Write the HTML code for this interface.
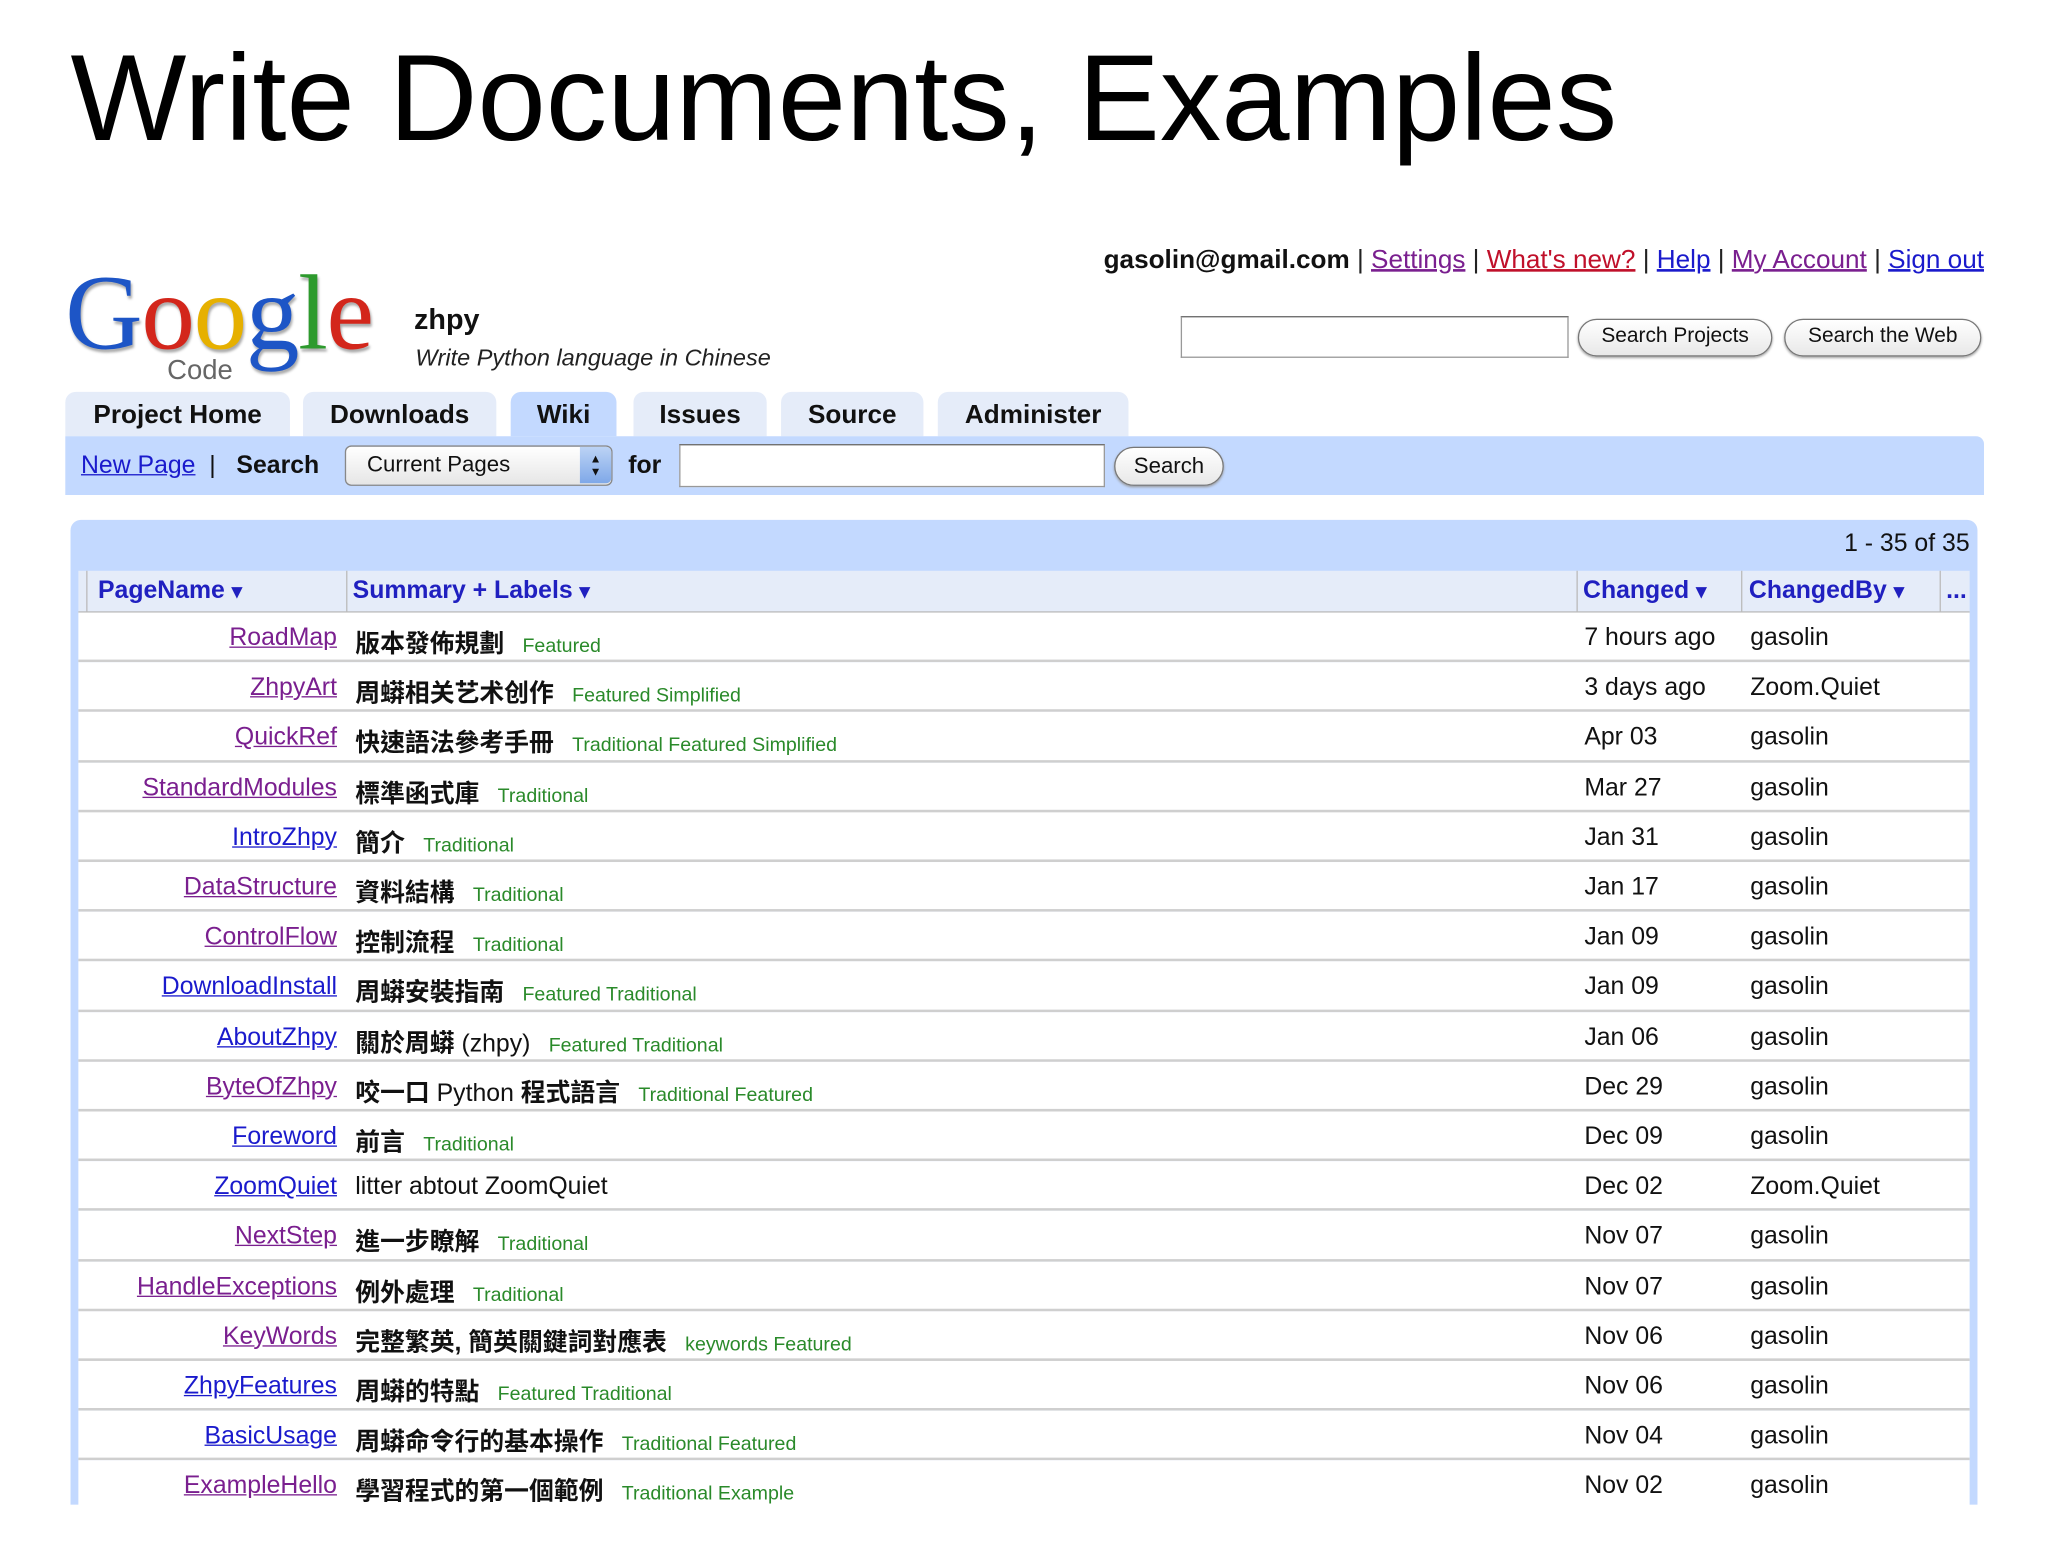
<!DOCTYPE html>
<html><head><meta charset="utf-8"><style>
*{margin:0;padding:0;box-sizing:border-box}
body{width:2048px;height:1536px;overflow:hidden;background:#fff;font-family:"Liberation Sans","Noto Sans CJK TC",sans-serif}
#s{position:absolute;left:0;top:0;width:1568px;height:1176px;transform:scale(1.30612);transform-origin:0 0}
.a{position:absolute;white-space:nowrap}
.pu{color:#7a1f8f;text-decoration:underline}
.bl{color:#1a1acc;text-decoration:underline}
.tab{position:absolute;top:300px;height:34px;background:#e5ecf9;border-radius:8px 8px 0 0;font-weight:bold;font-size:20px;color:#111;text-align:center;line-height:36px}
.btn{position:absolute;border:1.5px solid #777;border-radius:15px;background:linear-gradient(#fff,#e8e8e8);font-size:16px;color:#111;text-align:center;box-shadow:0 1px 2px #999}
.row{position:absolute;left:60px;width:1448px;height:38.2px;background:#fff;border-bottom:2px solid #cfcfcf;font-size:19px;color:#111}
.row span{position:absolute;top:9px;white-space:nowrap}
.n{right:1250px;text-align:right}
.sm{left:212px}
.sm b{font-weight:bold}
.sm i{font-style:normal;color:#2a8a2a;font-size:15px;margin-left:14px}
.c{left:1153px}.b{left:1280px}
.h{position:absolute;top:442px;font-weight:bold;font-size:19px;color:#2020c0}
</style></head><body><div id="s">
<div class="a" style="left:54px;top:21px;font-size:94px;color:#000">Write Documents, Examples</div>

<div class="a" style="right:49px;top:188px;font-size:20px;color:#222"><b style="color:#111">gasolin@gmail.com</b> | <span class="pu">Settings</span> | <span style="color:#c0102a;text-decoration:underline">What's new?</span> | <span class="bl">Help</span> | <span class="pu">My Account</span> | <span class="bl">Sign out</span></div>

<div class="a" style="left:50px;top:193px;font-family:'Liberation Serif',serif;font-size:82px;letter-spacing:-1px;text-shadow:1px 2px 2px #aaa"><span style="color:#1d55c6">G</span><span style="color:#d3261b">o</span><span style="color:#e6b000">o</span><span style="color:#1d55c6">g</span><span style="color:#2d9a2d">l</span><span style="color:#d3261b">e</span></div>
<div class="a" style="left:128px;top:272px;font-size:21px;color:#666">Code</div>
<div class="a" style="left:317px;top:232px;font-size:22px;font-weight:bold;color:#111">zhpy</div>
<div class="a" style="left:318px;top:264px;font-size:18px;font-style:italic;color:#222">Write Python language in Chinese</div>

<div class="a" style="left:904px;top:242px;width:297px;height:32px;border:1.5px solid #999;border-top-color:#666"></div>
<div class="btn" style="left:1208px;top:244px;width:149px;height:29px;line-height:26px">Search Projects</div>
<div class="btn" style="left:1366px;top:244px;width:151px;height:29px;line-height:26px">Search the Web</div>

<div class="tab" style="left:50px;width:172px">Project Home</div>
<div class="tab" style="left:232px;width:148px">Downloads</div>
<div class="tab" style="left:391px;width:81px;background:#c3d9ff">Wiki</div>
<div class="tab" style="left:485px;width:102px">Issues</div>
<div class="tab" style="left:598px;width:109px">Source</div>
<div class="tab" style="left:718px;width:146px">Administer</div>

<div class="a" style="left:50px;top:334px;width:1469px;height:45px;background:#c3d9ff;border-radius:0 6px 0 0"></div>
<div class="a" style="left:62px;top:346px;font-size:19px;color:#111"><span class="bl">New Page</span> &nbsp;|&nbsp;&nbsp; <b>Search</b></div>
<div class="a" style="left:264px;top:341px;width:205px;height:31px;border:1.5px solid #888;border-radius:5px;background:linear-gradient(#fff,#e6e6e6);font-size:17px;line-height:28px;padding-left:16px;color:#111">Current Pages<div style="position:absolute;right:0;top:0;width:24px;height:28px;background:linear-gradient(#bcd3f5,#7fa8e8);border-radius:0 4px 4px 0;font-size:9px;line-height:10px;text-align:center;padding-top:4px">▲<br>▼</div></div>
<div class="a" style="left:481px;top:346px;font-size:19px;font-weight:bold;color:#111">for</div>
<div class="a" style="left:520px;top:340px;width:326px;height:33px;background:#fff;border:1.5px solid #999;border-top-color:#666"></div>
<div class="btn" style="left:853px;top:342px;width:84px;height:30px;line-height:27px;font-size:17px">Search</div>

<div class="a" style="left:54px;top:398px;width:1460px;height:760px;background:#c3d9ff;border-radius:8px 8px 0 0"></div>
<div class="a" style="right:60px;top:406px;font-size:19px;color:#111">1 - 35 of 35</div>
<div class="a" style="left:60px;top:437px;width:1448px;height:33px;background:#e5ecf9;border-bottom:2px solid #bbb"></div>
<div class="a" style="left:66px;top:437px;width:1px;height:32px;background:#bbb"></div>
<div class="a" style="left:265px;top:437px;width:1px;height:32px;background:#bbb"></div>
<div class="a" style="left:1207px;top:437px;width:1px;height:32px;background:#bbb"></div>
<div class="a" style="left:1333px;top:437px;width:1px;height:32px;background:#bbb"></div>
<div class="a" style="left:1485px;top:437px;width:1px;height:32px;background:#bbb"></div>
<div class="h" style="left:75px">PageName <small>▾</small></div>
<div class="h" style="left:270px">Summary + Labels <small>▾</small></div>
<div class="h" style="left:1212px">Changed <small>▾</small></div>
<div class="h" style="left:1339px">ChangedBy <small>▾</small></div>
<div class="h" style="left:1490px">...</div>

<div class="row" style="top:469px"><span class="n pu">RoadMap</span><span class="sm"><b>版本發佈規劃</b><i>Featured</i></span><span class="c">7 hours ago</span><span class="b">gasolin</span></div>
<div class="row" style="top:507.2px"><span class="n pu">ZhpyArt</span><span class="sm"><b>周蟒相关艺术创作</b><i>Featured Simplified</i></span><span class="c">3 days ago</span><span class="b">Zoom.Quiet</span></div>
<div class="row" style="top:545.4px"><span class="n pu">QuickRef</span><span class="sm"><b>快速語法參考手冊</b><i>Traditional Featured Simplified</i></span><span class="c">Apr 03</span><span class="b">gasolin</span></div>
<div class="row" style="top:583.6px"><span class="n pu">StandardModules</span><span class="sm"><b>標準函式庫</b><i>Traditional</i></span><span class="c">Mar 27</span><span class="b">gasolin</span></div>
<div class="row" style="top:621.8px"><span class="n bl">IntroZhpy</span><span class="sm"><b>簡介</b><i>Traditional</i></span><span class="c">Jan 31</span><span class="b">gasolin</span></div>
<div class="row" style="top:660px"><span class="n pu">DataStructure</span><span class="sm"><b>資料結構</b><i>Traditional</i></span><span class="c">Jan 17</span><span class="b">gasolin</span></div>
<div class="row" style="top:698.2px"><span class="n pu">ControlFlow</span><span class="sm"><b>控制流程</b><i>Traditional</i></span><span class="c">Jan 09</span><span class="b">gasolin</span></div>
<div class="row" style="top:736.4px"><span class="n bl">DownloadInstall</span><span class="sm"><b>周蟒安裝指南</b><i>Featured Traditional</i></span><span class="c">Jan 09</span><span class="b">gasolin</span></div>
<div class="row" style="top:774.6px"><span class="n bl">AboutZhpy</span><span class="sm"><b>關於周蟒</b> (zhpy)<i>Featured Traditional</i></span><span class="c">Jan 06</span><span class="b">gasolin</span></div>
<div class="row" style="top:812.8px"><span class="n pu">ByteOfZhpy</span><span class="sm"><b>咬一口</b> Python <b>程式語言</b><i>Traditional Featured</i></span><span class="c">Dec 29</span><span class="b">gasolin</span></div>
<div class="row" style="top:851px"><span class="n bl">Foreword</span><span class="sm"><b>前言</b><i>Traditional</i></span><span class="c">Dec 09</span><span class="b">gasolin</span></div>
<div class="row" style="top:889.2px"><span class="n bl">ZoomQuiet</span><span class="sm">litter abtout ZoomQuiet</span><span class="c">Dec 02</span><span class="b">Zoom.Quiet</span></div>
<div class="row" style="top:927.4px"><span class="n pu">NextStep</span><span class="sm"><b>進一步瞭解</b><i>Traditional</i></span><span class="c">Nov 07</span><span class="b">gasolin</span></div>
<div class="row" style="top:965.6px"><span class="n pu">HandleExceptions</span><span class="sm"><b>例外處理</b><i>Traditional</i></span><span class="c">Nov 07</span><span class="b">gasolin</span></div>
<div class="row" style="top:1003.8px"><span class="n pu">KeyWords</span><span class="sm"><b>完整繁英, 簡英關鍵詞對應表</b><i>keywords Featured</i></span><span class="c">Nov 06</span><span class="b">gasolin</span></div>
<div class="row" style="top:1042px"><span class="n bl">ZhpyFeatures</span><span class="sm"><b>周蟒的特點</b><i>Featured Traditional</i></span><span class="c">Nov 06</span><span class="b">gasolin</span></div>
<div class="row" style="top:1080.2px"><span class="n bl">BasicUsage</span><span class="sm"><b>周蟒命令行的基本操作</b><i>Traditional Featured</i></span><span class="c">Nov 04</span><span class="b">gasolin</span></div>
<div class="row" style="top:1118.4px;border-bottom:none"><span class="n pu">ExampleHello</span><span class="sm"><b>學習程式的第一個範例</b><i>Traditional Example</i></span><span class="c">Nov 02</span><span class="b">gasolin</span></div>
<div class="a" style="left:0;top:1152px;width:1568px;height:30px;background:#fff"></div>
</div></body></html>
